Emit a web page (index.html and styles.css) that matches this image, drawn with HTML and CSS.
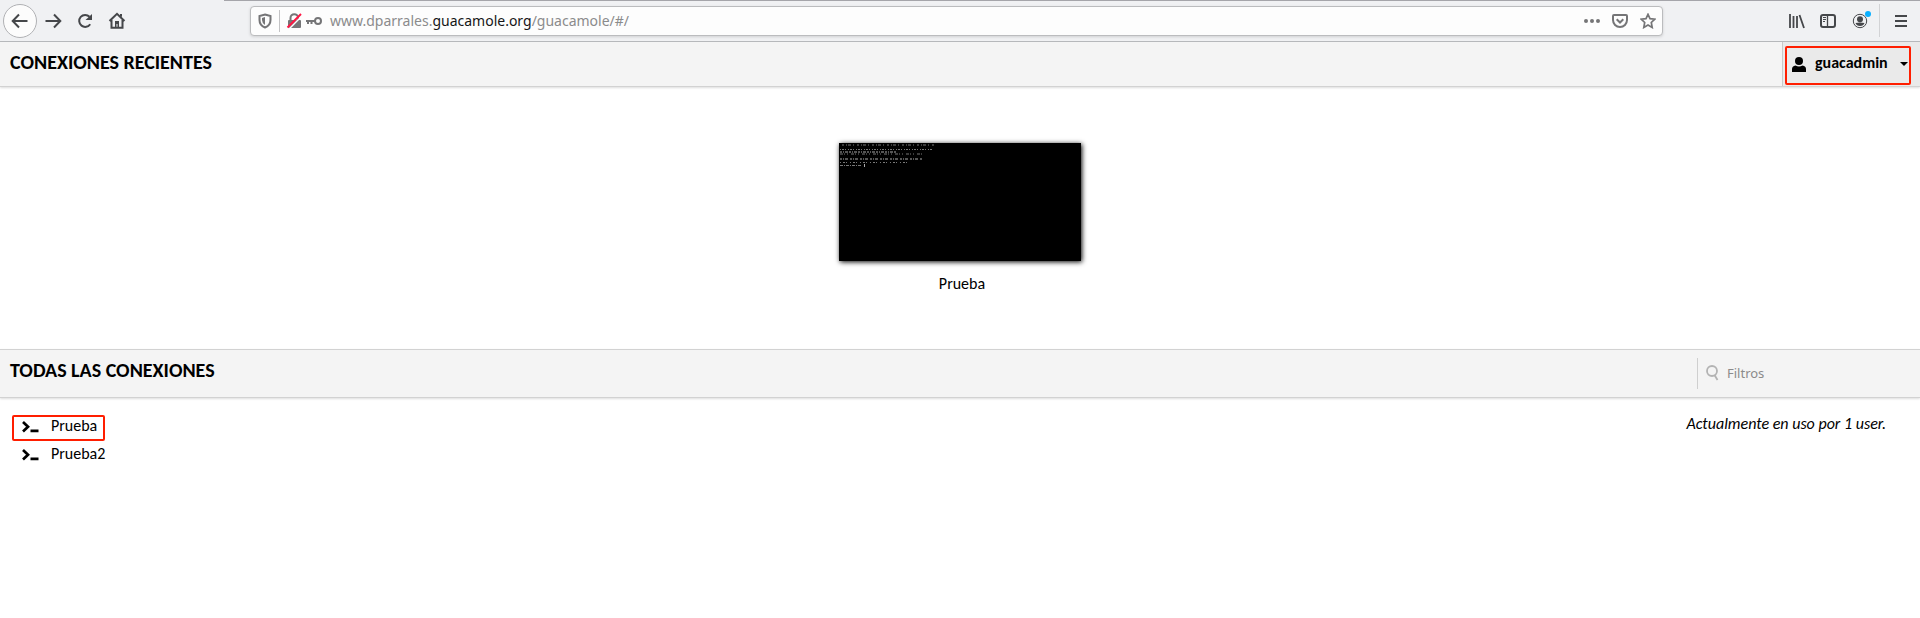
FILE: index.html
```html
<!DOCTYPE html>
<html lang="es">
<head>
<meta charset="utf-8">
<title>Guacamole</title>
<link rel="stylesheet" href="styles.css">
</head>
<body>
<nav class="toolbar">
  <div class="nav-buttons">
    <span class="back"><svg width="18" height="18" viewBox="0 0 18 18"><path d="M16.500 9H2M8 2.500L1.700 9L8 15.500"/></svg></span>
    <svg class="forward" width="18" height="18" viewBox="0 0 18 18"><path d="M1.500 9H16M10 2.500L16.300 9L10 15.500"/></svg>
    <svg class="reload" width="18" height="18" viewBox="0 0 18 18"><path d="M14.200 12.200A6 6 0 1 1 13.500 4.700"/><path class="solid" d="M16 2V8H9.500Z"/></svg>
    <svg class="home" width="18" height="18" viewBox="0 0 18 18"><path d="M1.500 9L9 1.800L16.500 9M3.500 8V15.800H14.500V8"/><path class="solid" d="M7 9h4v6.500H9.500V12H8.500v3.500H7zM12 2h2v3l-2-1z"/></svg>
  </div>
  <div class="address">
    <svg class="shield" width="14" height="16" viewBox="0 0 14 16"><path d="M7 1.500L12.500 3V7C12.500 11 10 13.300 7 14.500C4 13.300 1.500 11 1.500 7V3Z"/><path class="solid" d="M7 4V12Q4 10 4 7V5Z"/></svg>
    <i class="address-rule"></i>
    <svg class="lock" width="16" height="16" viewBox="0 0 16 16"><rect class="solid" x="2" y="7" width="13" height="8" rx="1"/><path d="M4.500 8V5a3.800 3.800 0 0 1 7.600 0V8"/><path class="halo" d="M3.500 15.500L15.500 3.500"/><path class="slash" d="M1.500 14.500L15 1"/></svg>
    <svg class="key" width="16" height="10" viewBox="0 0 16 10"><circle cx="12" cy="5" r="3"/><path d="M9 5H0M2 5V8M5.500 5V8"/></svg>
    <span class="url">www.dparrales.<b>guacamole.org</b>/guacamole/#/</span>
    <svg class="dots" width="16" height="4" viewBox="0 0 16 4"><circle cx="2" cy="2" r="2"/><circle cx="8" cy="2" r="2"/><circle cx="14" cy="2" r="2"/></svg>
    <svg class="pocket" width="16" height="16" viewBox="0 0 16 16"><path d="M2 2H14Q15 2 15 3V7A7 7 0 0 1 1 7V3Q1 2 2 2ZM4.700 6.300L8 9.500L11.300 6.300"/></svg>
    <svg class="star" width="16" height="16" viewBox="0 0 16 16"><path d="M8 1.300L10 5.600L14.800 6.200L11.300 9.500L12.200 14.500L8 12.100L3.800 14.500L4.700 9.500L1.200 6.200L6 5.600Z"/></svg>
  </div>
  <div class="tools">
    <svg class="library" width="16" height="16" viewBox="0 0 16 16"><path d="M1 1V15M4.500 3V15M8 3V15M10.500 2L15 15"/></svg>
    <svg class="sidebar" width="16" height="16" viewBox="0 0 16 16"><rect x="1" y="2" width="14" height="12" rx="2"/><path class="divider" d="M7.500 2V14"/><path class="thin" d="M3 4.500H6M3 6.500H6M3 8.500H5"/></svg>
    <span class="account"><svg width="16" height="16" viewBox="0 0 16 16"><circle class="ring" cx="8" cy="8" r="6.700"/><circle class="solid" cx="8" cy="6.300" r="3"/><path class="solid" d="M3.500 10Q8 9 12.500 10Q11.500 13 8 13Q4.500 13 3.500 10Z"/></svg><i class="account-dot"></i></span>
    <i class="tools-rule"></i>
    <svg class="menu" width="14" height="14" viewBox="0 0 14 14"><path d="M1 2H13M1 7H13M1 12H13"/></svg>
  </div>
</nav>
<header class="header header-recent">
  <h2 class="recent-title">CONEXIONES RECIENTES</h2>
  <div class="user-menu">
    <div class="user-box">
      <svg width="14" height="15" viewBox="0 0 14 15"><circle cx="7" cy="4" r="4"/><path d="M0 15V12Q0 9 3.500 8.500Q7 10.500 10.500 8.500Q14 9 14 12V15Z"/></svg>
      <span class="user-name">guacadmin</span>
      <svg class="caret" width="8" height="4" viewBox="0 0 8 4"><path d="M0 0H8L4 4Z"/></svg>
    </div>
  </div>
</header>
<section class="recent">
  <svg class="thumbnail" width="242" height="118" viewBox="0 0 242 118">
    <path d="M3 2H95" stroke-dasharray="2 2 1 1 3 2 1 3"/>
    <path d="M1 6.500H93" stroke-dasharray="1 1 2 1 1 2"/>
    <path class="bright" d="M1 9H57" stroke-dasharray="2 1 1 1 3 1"/>
    <path d="M1 11H84" stroke-dasharray="3 1 1 2 1 3"/>
    <path class="bright" d="M1 16H83" stroke-dasharray="2 1 1 1 3 2"/>
    <path d="M1 19.500H70" stroke-dasharray="1 2 2 1 1 3"/>
    <path d="M1 22.500H22" stroke-dasharray="3 1 1 1"/>
    <path class="bright" d="M25.500 21V24"/>
  </svg>
  <span class="recent-name">Prueba</span>
</section>
<header class="header header-all">
  <h2 class="all-title">TODAS LAS CONEXIONES</h2>
  <div class="filter">
    <svg width="13" height="16" viewBox="0 0 13 16"><circle cx="6" cy="6" r="5"/><path d="M8.500 10L11.500 15"/></svg>
    <span>Filtros</span>
  </div>
</header>
<main class="connections">
  <div class="list">
    <div class="connection marked"><svg width="17" height="12" viewBox="0 0 17 12"><path d="M1 1L6 5.700L1 10.400M8.500 9.800H16.500"/></svg><span class="name-one">Prueba</span></div>
    <div class="connection"><svg width="17" height="12" viewBox="0 0 17 12"><path d="M1 1L6 5.700L1 10.400M8.500 9.800H16.500"/></svg><span class="name-two">Prueba2</span></div>
  </div>
  <em class="usage">Actualmente en uso por 1 user.</em>
</main>
</body>
</html>
```
FILE: styles.css
```css
* { box-sizing: border-box; }
body { margin: 0; background: #fff; color: #000; font-family: Carlito, Lato, sans-serif; height: 618px; overflow: hidden; }
svg { display: block; flex: none; fill: none; }
.toolbar { height: 42px; display: flex; background: linear-gradient(#a5a5aa, #a5a5aa) 224px 0 / 100% 1px no-repeat #f0f1f3; border-bottom: 1px solid #b8babd; stroke: #45474a; stroke-width: 2; }
.solid { fill: #45474a; stroke: none; }
.nav-buttons { width: 250px; padding-left: 3px; display: flex; align-items: center; }
.back { width: 34px; height: 34px; border: 1px solid #b0b1b4; border-radius: 50%; background: #fcfcfc; display: flex; align-items: center; justify-content: center; }
.forward { margin-left: 7px; }
.reload { margin-left: 14px; }
.home { margin-left: 14px; }
.address { width: 1413px; height: 30px; margin-top: 6px; border: 1px solid #bbbcbe; border-radius: 4px; background: #fdfdfd; box-shadow: 0 1px 3px #0002; display: flex; align-items: center; padding-left: 7px; stroke: #757577; }
.address .solid { fill: #757577; }
.address-rule { width: 1px; height: 22px; background: #c3c3c5; margin: 0 7px 0 7px; }
.lock { margin-left: -1px; }
.lock .halo { stroke: #fdfdfd; stroke-width: 1.5; }
.lock .slash { stroke: #ff1744; }
.key { margin-left: 4px; }
.url { margin-left: 8px; width: 1254px; padding-bottom: 1px; font: 14px/20px "Noto Sans", sans-serif; color: #8b8b8c; white-space: nowrap; }
.url b { font-weight: 400; color: #151517; }
.dots { fill: #757577; stroke: none; }
.pocket { margin-left: 12px; }
.star { margin-left: 12px; stroke-width: 1.700; }
.tools { margin-left: 126px; display: flex; align-items: center; }
.library { stroke-width: 1.800; }
.sidebar { margin-left: 15px; }
.sidebar .thin { stroke-width: 1; }
.sidebar .divider { stroke-width: 1.300; }
.account { position: relative; margin-left: 16px; }
.account .ring { stroke-width: 1; }
.account-dot { position: absolute; right: -3px; top: -2px; width: 6px; height: 6px; border-radius: 50%; background: #0ab0ff; }
.tools-rule { width: 1px; height: 33px; margin-left: 11px; background: #d2d3d5; }
.menu { margin-left: 14px; }
.header { display: flex; justify-content: space-between; background: #f4f4f4; border-bottom: 1px solid #d2d2d2; box-shadow: 0 1px 2px #0002; }
.header h2 { margin: 0 0 0 10px; font-size: 20px; line-height: 24px; font-weight: 700; white-space: nowrap; }
.header-recent { height: 45px; }
.header-recent h2 { padding-top: 8px; }
.user-menu { width: 138px; background: #eaeaea; border-left: 1px solid #c9c9c9; padding: 4px 0 0 2px; }
.user-box { width: 126px; height: 39px; border: 2px solid #ff1e00; border-radius: 2px; display: flex; align-items: center; padding: 0 0 4px 5px; }
.user-box svg { fill: #000; }
.user-box > svg:first-child { margin-top: 2px; }
.user-name { width: 75px; margin-left: 9px; padding-bottom: 1px; font-size: 16px; line-height: 20px; font-weight: 700; }
.user-box .caret { margin-left: 10px; }
.recent { height: 262px; padding-top: 56px; display: flex; flex-direction: column; align-items: center; }
.thumbnail { background: #000; box-shadow: 1px 1px 5px #000; stroke: #777; stroke-width: 1; }
.thumbnail .bright { stroke: #aaa; }
.recent-name { margin: 13px 0 0 4px; font-size: 16px; line-height: 20px; }
.header-all { height: 49px; border-top: 1px solid #d2d2d2; }
.header-all h2 { padding-top: 8px; }
.filter { width: 223px; height: 31px; margin-top: 8px; padding: 0 0 1px 8px; border-left: 1px solid #cfcfcf; display: flex; align-items: center; gap: 8px; font: 13px/18px "Noto Sans", sans-serif; color: #8b8b8b; stroke: #b3b3b3; stroke-width: 1.800; }
.filter span { stroke: none; }
.connections { display: flex; justify-content: space-between; padding: 17px 34px 0 12px; }
.connection { height: 28px; width: 120px; padding: 0 0 3px 10px; display: flex; align-items: center; gap: 12px; font-size: 16px; line-height: 20px; stroke: #000; stroke-width: 2.700; }
.connection span { stroke: none; }
.connection svg { margin-top: 3px; }
.marked { width: 93px; height: 26px; border: 2px solid #ff1e00; border-radius: 2px; padding: 0 0 4px 8px; }
.marked svg { margin-top: 2px; }
.usage { margin-top: -1px; font-size: 16px; line-height: 20px; height: 20px; white-space: nowrap; }
```
